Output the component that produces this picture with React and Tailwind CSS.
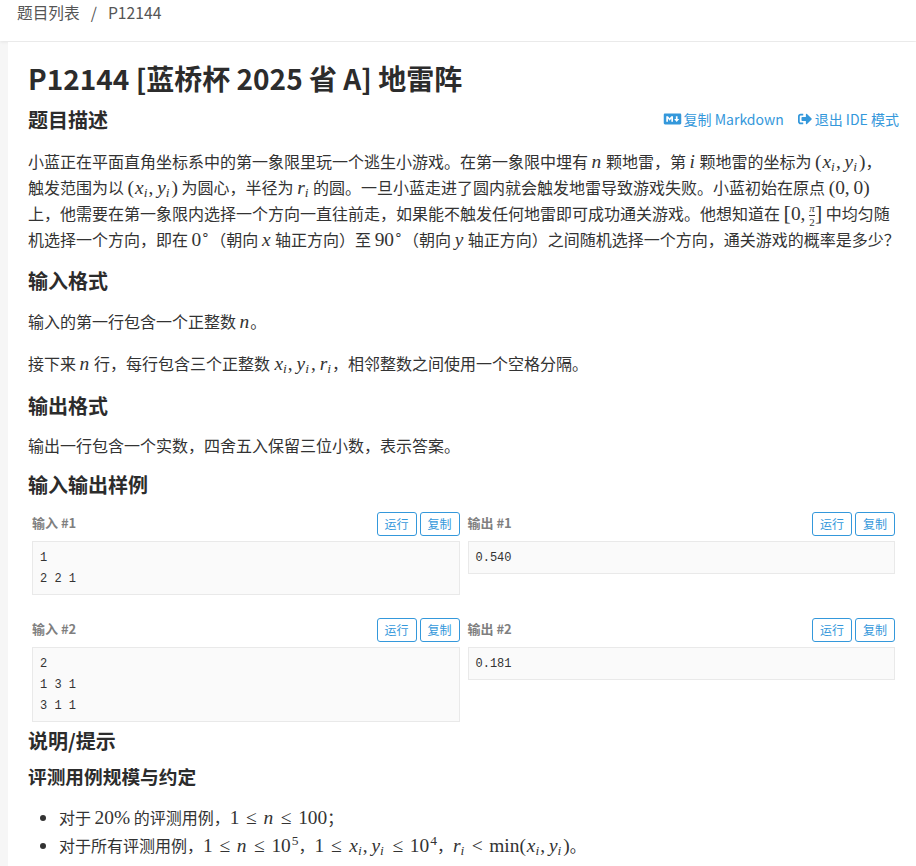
import React from "react";
import { FaMarkdown, FaSignOutAlt } from "react-icons/fa";

const CJK = '"Noto Sans CJK SC", "Noto Sans", sans-serif';

function V({ children }) {
  return <span className="font-['Liberation_Serif',serif] italic text-[19.4px] leading-none tracking-[1px]">{children}</span>;
}
function R({ children }) {
  return <span className="font-['Liberation_Serif',serif] text-[19.4px] leading-none">{children}</span>;
}
function Rel({ children }) {
  return <span className="inline-block w-[24px] text-center font-['Liberation_Serif',serif] text-[19.4px] leading-none">{children}</span>;
}
function Sub({ children }) {
  return <span className="font-['Liberation_Serif',serif] italic text-[13.5px] leading-none align-[-3px] ml-[-1px] mr-[1px]">{children}</span>;
}
function Sup({ children }) {
  return <span className="font-['Liberation_Serif',serif] text-[13.5px] leading-none align-[7px] ml-[1px]">{children}</span>;
}
function Deg() {
  return <span className="font-['Liberation_Serif',serif] text-[13.5px] leading-none align-[7px]">∘</span>;
}
function XY() {
  return <span className="whitespace-nowrap px-[1px]"><V>x</V><Sub>i</Sub><R>,&thinsp;</R><V>y</V><Sub>i</Sub></span>;
}
function H2({ children, className = "" }) {
  return <h2 className={"text-[20px] leading-[28px] font-bold text-[#2c2c2c] " + className}>{children}</h2>;
}
function Btn({ children }) {
  return (
    <span className="inline-flex h-[24px] w-[40px] items-center justify-center rounded-[3px] border border-[#3498db] bg-white text-[12px] text-[#3498db]">
      {children}
    </span>
  );
}
function Sample({ label, text }) {
  return (
    <div className="min-w-0">
      <div className="flex h-[24px] items-center justify-between">
        <span className="pb-[2px] text-[13px] font-bold text-[#7f7f7f]">{label}</span>
        <span className="flex gap-[3px]">
          <Btn>运行</Btn>
          <Btn>复制</Btn>
        </span>
      </div>
      <pre className="mt-[5px] border border-[#e9e9e9] bg-[#fafafa] px-[7px] pt-[6px] pb-[4px] font-['Liberation_Mono',monospace] text-[12px] leading-[21px] text-[#333]">{text}</pre>
    </div>
  );
}

export default function App() {
  return (
    <div className="h-[866px] overflow-hidden bg-[#f6f6f6] text-[16px] leading-[26px] text-[#333]" style={{ fontFamily: CJK }}>
      <header className="flex h-[41px] items-start bg-white pl-[17px] pt-[1px] text-[15.7px] leading-[24px] text-[#555] shadow-[0_1px_3px_rgba(0,0,0,0.08)]">
        <span>题目列表</span>
        <span className="mx-[11px]">/</span>
        <span>P12144</span>
      </header>
      <main className="ml-[8px] mt-[1px] h-[824px] bg-white pl-[20px] pr-[17px] pt-[17px]">
        <h1 className="text-[28px] leading-[38px] font-bold text-[#2c2c2c]">P12144 [蓝桥杯 2025 省 A] 地雷阵</h1>
        <div className="mt-[9px] flex h-[28px] items-center justify-between">
          <H2>题目描述</H2>
          <div className="flex items-center gap-[14px] pb-[2px] text-[14px] text-[#3498db]">
            <span className="flex items-center gap-[2px]"><FaMarkdown className="h-[14px] w-[19px]" />复制 Markdown</span>
            <span className="flex items-center gap-[3px]"><FaSignOutAlt className="h-[14px] w-[14px]" />退出 IDE 模式</span>
          </div>
        </div>
        <p className="mt-[14px] whitespace-nowrap">
          小蓝正在平面直角坐标系中的第一象限里玩一个逃生小游戏。在第一象限中埋有 <V>n</V> 颗地雷，第 <V>i</V> 颗地雷的坐标为 <R>(</R><XY /><R>)</R>，<br />
          触发范围为以 <R>(</R><XY /><R>)</R> 为圆心，半径为 <V>r</V><Sub>i</Sub> 的圆。一旦小蓝走进了圆内就会触发地雷导致游戏失败。小蓝初始在原点 <R>(0,&thinsp;0)</R><br />
          上，他需要在第一象限内选择一个方向一直往前走，如果能不触发任何地雷即可成功通关游戏。他想知道在 <span className="font-['Liberation_Serif',serif] text-[22px] leading-none">[</span><R>0,&thinsp;</R>
          <span className="my-[-8px] inline-flex flex-col align-middle font-['Liberation_Serif',serif] text-[11px] leading-[13px] text-center"><span className="border-b border-[#333] italic">π</span><span>2</span></span><span className="font-['Liberation_Serif',serif] text-[22px] leading-none">]</span> 中均匀随<br />
          机选择一个方向，即在 <R>0</R><Deg />（朝向 <V>x</V> 轴正方向）至 <R>90</R><Deg />（朝向 <V>y</V> 轴正方向）之间随机选择一个方向，通关游戏的概率是多少？
        </p>
        <H2 className="mt-[15px]">输入格式</H2>
        <p className="mt-[13px]">输入的第一行包含一个正整数 <V>n</V>。</p>
        <p className="mt-[16px]">接下来 <V>n</V> 行，每行包含三个正整数 <XY /><R>,&thinsp;</R><V>r</V><Sub>i</Sub>，相邻整数之间使用一个空格分隔。</p>
        <H2 className="mt-[16px]">输出格式</H2>
        <p className="mt-[12px]">输出一行包含一个实数，四舍五入保留三位小数，表示答案。</p>
        <H2 className="mt-[13px]">输入输出样例</H2>
        <div className="mt-[13px] grid grid-cols-2 items-start gap-x-[8px] gap-y-[23px] pl-[4px] pr-[4px]">
          <Sample label="输入 #1" text={"1\n2 2 1"} />
          <Sample label="输出 #1" text={"0.540"} />
          <Sample label="输入 #2" text={"2\n1 3 1\n3 1 1"} />
          <Sample label="输出 #2" text={"0.181"} />
        </div>
        <H2 className="mt-[5px]">说明/提示</H2>
        <h3 className="mt-[7px] text-[18.7px] leading-[28px] font-bold text-[#2c2c2c]">评测用例规模与约定</h3>
        <ul className="mt-[13px] list-disc pl-[31px] leading-[28px] marker:text-[#333]">
          <li>对于 <R>20%</R> 的评测用例，<R>1</R><Rel>≤</Rel><V>n</V><Rel>≤</Rel><R>100</R>；</li>
          <li>对于所有评测用例，<R>1</R><Rel>≤</Rel><V>n</V><Rel>≤</Rel><R>10</R><Sup>5</Sup>，<R>1</R><Rel>≤</Rel><XY /><Rel>≤</Rel><R>10</R><Sup>4</Sup>，<V>r</V><Sub>i</Sub><Rel>&lt;</Rel><R>min(</R><XY /><R>)</R>。</li>
        </ul>
      </main>
    </div>
  );
}
